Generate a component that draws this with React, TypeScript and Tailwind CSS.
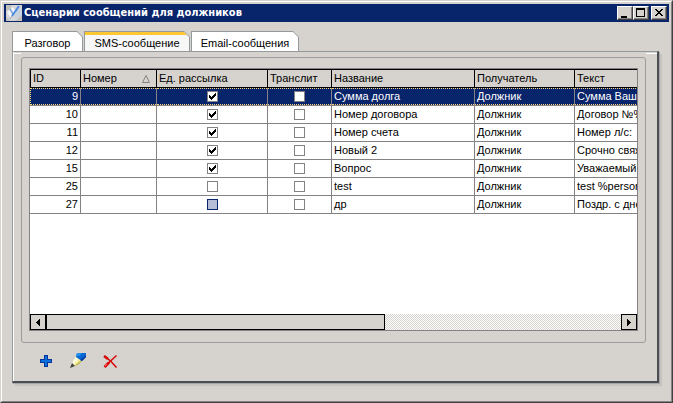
import { useState } from "react";
import type { ReactNode } from "react";

type Row = {
  id: number;
  single: "on" | "off" | "focus";
  name: string;
  text: string;
};

const rows: Row[] = [
  { id: 9, single: "on", name: "Сумма долга", text: "Сумма Ваше" },
  { id: 10, single: "on", name: "Номер договора", text: "Договор №%" },
  { id: 11, single: "on", name: "Номер счета", text: "Номер л/с:" },
  { id: 12, single: "on", name: "Новый 2", text: "Срочно свяж" },
  { id: 15, single: "on", name: "Вопрос", text: "Уважаемый" },
  { id: 25, single: "off", name: "test", text: "test %person" },
  { id: 27, single: "focus", name: "др", text: "Поздр. с дне" },
];

const tabs = [
  { label: "Разговор", width: "w-[71px]" },
  { label: "SMS-сообщение", width: "w-[106px]" },
  { label: "Email-сообщения", width: "w-[108px]" },
];

function CaptionButton({ label, children }: { label: string; children: ReactNode }) {
  return (
    <button
      type="button"
      aria-label={label}
      className="h-3.5 w-4 border border-t-white border-l-white border-r-[#424142] border-b-[#424142] bg-[#d6d3ce] shadow-[inset_-1px_-1px_#848284]"
    >
      <svg viewBox="0 0 14 12" className="block h-3 w-3.5" shapeRendering="crispEdges">
        {children}
      </svg>
    </button>
  );
}

function TitleBar() {
  return (
    <header className="flex h-[18px] items-center bg-[#08246b] px-0.5">
      <svg viewBox="0 0 16 16" className="mr-0.5 h-4 w-4 shrink-0">
        <rect width="16" height="16" fill="#d3d5d6" />
        <path d="M0 0H6L4 4L0 6ZM16 10V16H9ZM0 12L4 16H0Z" fill="#c2c0b8" />
        <path d="M10 5L15 2V11L9 14Z" fill="#c6d2de" />
        <path d="M1 7L7 2L10 7L5 14Z" fill="#f4f5f5" />
        <path d="M4 4L7 9" stroke="#7ba6e0" strokeWidth="1.500" />
        <path d="M13 1L6 11" stroke="#4a8ade" strokeWidth="2" />
        <path d="M6 11L4 14" stroke="#8a98aa" strokeWidth="1" />
      </svg>
      <h1 className="flex-1 truncate font-['DejaVu_Sans_Condensed','DejaVu_Sans',sans-serif] text-[11px] leading-4 font-bold text-white">
        Сценарии сообщений для должников
      </h1>
      <div className="flex">
        <CaptionButton label="Свернуть">
          <path d="M3 9H9V11H3Z" />
        </CaptionButton>
        <CaptionButton label="Развернуть">
          <path fillRule="evenodd" d="M2 1H11V10H2ZM3 3V9H10V3Z" />
        </CaptionButton>
        <span className="w-0.5" />
        <CaptionButton label="Закрыть">
          <path d="M3 2H5V3H6V4H8V3H9V2H11V3H10V4H9V5H8V6H9V7H10V8H11V9H9V8H8V7H6V8H5V9H3V8H4V7H5V6H6V5H5V4H4V3H3Z" />
        </CaptionButton>
      </div>
    </header>
  );
}

function Tabs() {
  const [active, setActive] = useState(1);
  return (
    <div role="tablist" className="flex gap-px">
      {tabs.map((tab, i) => (
        <button
          key={tab.label}
          type="button"
          role="tab"
          aria-selected={i === active}
          onClick={() => setActive(i)}
          className={`${tab.width} h-5 bg-[#949a9c] p-px pb-0 [clip-path:polygon(0_0,calc(100%-6px)_0,100%_6px,100%_100%,0_100%)]`}
        >
          <span
            className={`block h-full [clip-path:polygon(0_0,calc(100%-5px)_0,100%_5px,100%_100%,0_100%)] ${
              i === active ? "border-t-3 border-[#ffc731] bg-[#f7f7f7] leading-4" : "bg-white pt-[3px] leading-4"
            }`}
          >
            {tab.label}
          </span>
        </button>
      ))}
    </div>
  );
}

function Tick({ label, checked, focused }: { label: string; checked: boolean; focused?: boolean }) {
  return (
    <span className="grid h-full place-content-center">
      <input
        type="checkbox"
        aria-label={label}
        defaultChecked={checked}
        className={`peer col-start-1 row-start-1 size-[11px] appearance-none border ${
          focused ? "border-[#08246b] bg-[#b5bed6]" : "border-[#848284] bg-white"
        }`}
      />
      <svg
        viewBox="0 0 11 11"
        className="pointer-events-none invisible col-start-1 row-start-1 size-[11px] peer-checked:visible"
        shapeRendering="crispEdges"
      >
        <path
          fill="#000"
          d="M2 4H3V5H4V6H5V5H6V4H7V3H8V2H9V5H8V6H7V7H6V8H5V9H4V8H3V7H2Z"
        />
      </svg>
    </span>
  );
}

function Cell({ selected, first, children }: { selected: boolean; first?: boolean; children?: ReactNode }) {
  return (
    <td className={`border-r border-b border-[#848284] p-0 ${selected ? "bg-[#08246b] text-white" : ""}`}>
      <div
        className={`h-[17px] px-0.5 whitespace-nowrap ${first ? "text-right" : ""} ${
          selected ? "border-y border-dotted border-[#ffd77b] leading-[15px]" : "leading-[17px]"
        } ${selected && first ? "border-l" : ""}`}
      >
        {children}
      </div>
    </td>
  );
}

function Grid() {
  const head = "h-[19px] border-y border-r border-black bg-[#d6d3ce] px-0.5 py-0 text-left font-normal";
  return (
    <table className="w-[745px] table-fixed border-separate border-spacing-0">
      <colgroup>
        <col className="w-[51px]" />
        <col className="w-[76px]" />
        <col className="w-[111px]" />
        <col className="w-16" />
        <col className="w-[143px]" />
        <col className="w-[100px]" />
        <col />
      </colgroup>
      <thead>
        <tr>
          <th className={`${head} border-l`}>ID</th>
          <th className={head}>
            <span className="flex items-center justify-between pr-1">
              Номер
              <svg viewBox="0 0 8 8" className="size-2" fill="none" stroke="#848284">
                <path d="M4 0.5L7.5 7.5H0.5Z" />
              </svg>
            </span>
          </th>
          <th className={head}>Ед. рассылка</th>
          <th className={head}>Транслит</th>
          <th className={head}>Название</th>
          <th className={head}>Получатель</th>
          <th className={head}>Текст</th>
        </tr>
      </thead>
      <tbody>
        {rows.map((row, i) => (
          <tr key={row.id}>
            <Cell selected={i === 0} first>{row.id}</Cell>
            <Cell selected={i === 0} />
            <Cell selected={i === 0}>
              <Tick label="Ед. рассылка" checked={row.single === "on"} focused={row.single === "focus"} />
            </Cell>
            <Cell selected={i === 0}>
              <Tick label="Транслит" checked={false} />
            </Cell>
            <Cell selected={i === 0}>{row.name}</Cell>
            <Cell selected={i === 0}>Должник</Cell>
            <Cell selected={i === 0}>{row.text}</Cell>
          </tr>
        ))}
      </tbody>
    </table>
  );
}

function ScrollBar() {
  return (
    <div className="flex h-4 bg-[conic-gradient(#fff_25%,#d6d3ce_25%_50%,#fff_50%_75%,#d6d3ce_75%)] bg-[length:2px_2px]">
      <button type="button" aria-label="Влево" className="w-4 border border-black bg-[#d6d3ce]">
        <svg viewBox="0 0 14 14" className="size-3.5" shapeRendering="crispEdges">
          <path d="M5 7H6V6H7V5H8V4H9V11H8V10H7V9H6V8H5Z" />
        </svg>
      </button>
      <div className="w-[339px] border border-black bg-[#d6d3ce]" />
      <button type="button" aria-label="Вправо" className="ml-auto w-4 border border-black bg-[#d6d3ce]">
        <svg viewBox="0 0 14 14" className="size-3.5" shapeRendering="crispEdges">
          <path d="M9 7H8V6H7V5H6V4H5V11H6V10H7V9H8V8H9Z" />
        </svg>
      </button>
    </div>
  );
}

function Toolbar() {
  return (
    <div className="flex gap-4 px-6 pt-[9px]">
      <button type="button" aria-label="Добавить" className="size-4">
        <svg viewBox="0 0 16 16" className="size-4" shapeRendering="crispEdges">
          <path fill="#08349c" d="M6 3H10V7H14V11H10V15H6V11H2V7H6Z" />
          <path fill="#0871de" d="M7 4H9V8H13V10H9V14H7V10H3V8H7Z" />
        </svg>
      </button>
      <button type="button" aria-label="Изменить" className="size-4">
        <svg viewBox="0 0 16 16" className="size-4">
          <path d="M6 5L11 9L8 12L2 15L3 9Z" fill="#f7f3a5" />
          <path d="M6 5L8 7L4 12L2 14L3 9Z" fill="#fffbe0" />
          <path d="M11 8L12 9L8 13L4 14Z" fill="#c6bc52" />
          <path d="M0 16L2 11L5 14Z" fill="#424542" />
          <path d="M7 1H16V5L12 9L6 5Z" fill="#0869d6" />
          <path d="M7 1H12L9 4L6 4Z" fill="#2992ef" />
          <path d="M16 3V5L12 9L10 8Z" fill="#083c9c" />
        </svg>
      </button>
      <button type="button" aria-label="Удалить" className="size-4">
        <svg viewBox="0 0 16 16" className="size-4" fill="none">
          <path d="M2.500 4L9 9.500L14.500 15.500" stroke="#d60808" strokeWidth="1.500" />
          <path d="M14.500 3.500L8 9.500L3 15" stroke="#d60808" strokeWidth="1.500" />
          <path d="M2 4L6 7M7 10.500L2.500 15" stroke="#d60808" strokeWidth="2.500" />
          <path d="M3 14L5 12" stroke="#ff7b63" />
        </svg>
      </button>
    </div>
  );
}

export default function App() {
  return (
    <div className="flex min-h-screen flex-col border-t border-r border-b border-l border-t-[#d6d3ce] border-r-[#424142] border-b-[#424142] border-l-[#d6d3ce] bg-[#d6d3ce] font-['Liberation_Sans',Arial,sans-serif] text-[11px] text-black">
      <div className="flex flex-1 flex-col border border-t-white border-r-[#848284] border-b-[#848284] border-l-white p-0.5">
        <TitleBar />
        <main className="flex flex-1 flex-col pt-[9px] pr-2.5 pb-4 pl-2">
          <Tabs />
          <section className="flex flex-1 flex-col border-t border-r-2 border-b-2 border-l border-t-[#949a9c] border-r-[#4a4d52] border-b-[#4a4d52] border-l-[#949a9c] shadow-[1px_1px_#a5a6a8,3px_3px_1px_#c6c3c1]">
            <div className="flex flex-1 flex-col border-l border-white pt-px">
              <div className="flex h-px justify-between">
                <span className="w-[7px] bg-white" />
                <span className="w-[11px] bg-white" />
              </div>
              <div className="mt-[3px] mr-[11px] ml-[7px] flex flex-1 flex-col rounded-[3px] border border-[#9c9a9c] px-[7px] pt-2.5 pb-[11px]">
                <div className="flex flex-1 flex-col overflow-hidden border border-[#848284] bg-white">
                  <div className="flex-1 overflow-hidden">
                    <Grid />
                  </div>
                  <ScrollBar />
                </div>
              </div>
              <div className="h-[38px]">
                <Toolbar />
              </div>
            </div>
          </section>
        </main>
      </div>
    </div>
  );
}
